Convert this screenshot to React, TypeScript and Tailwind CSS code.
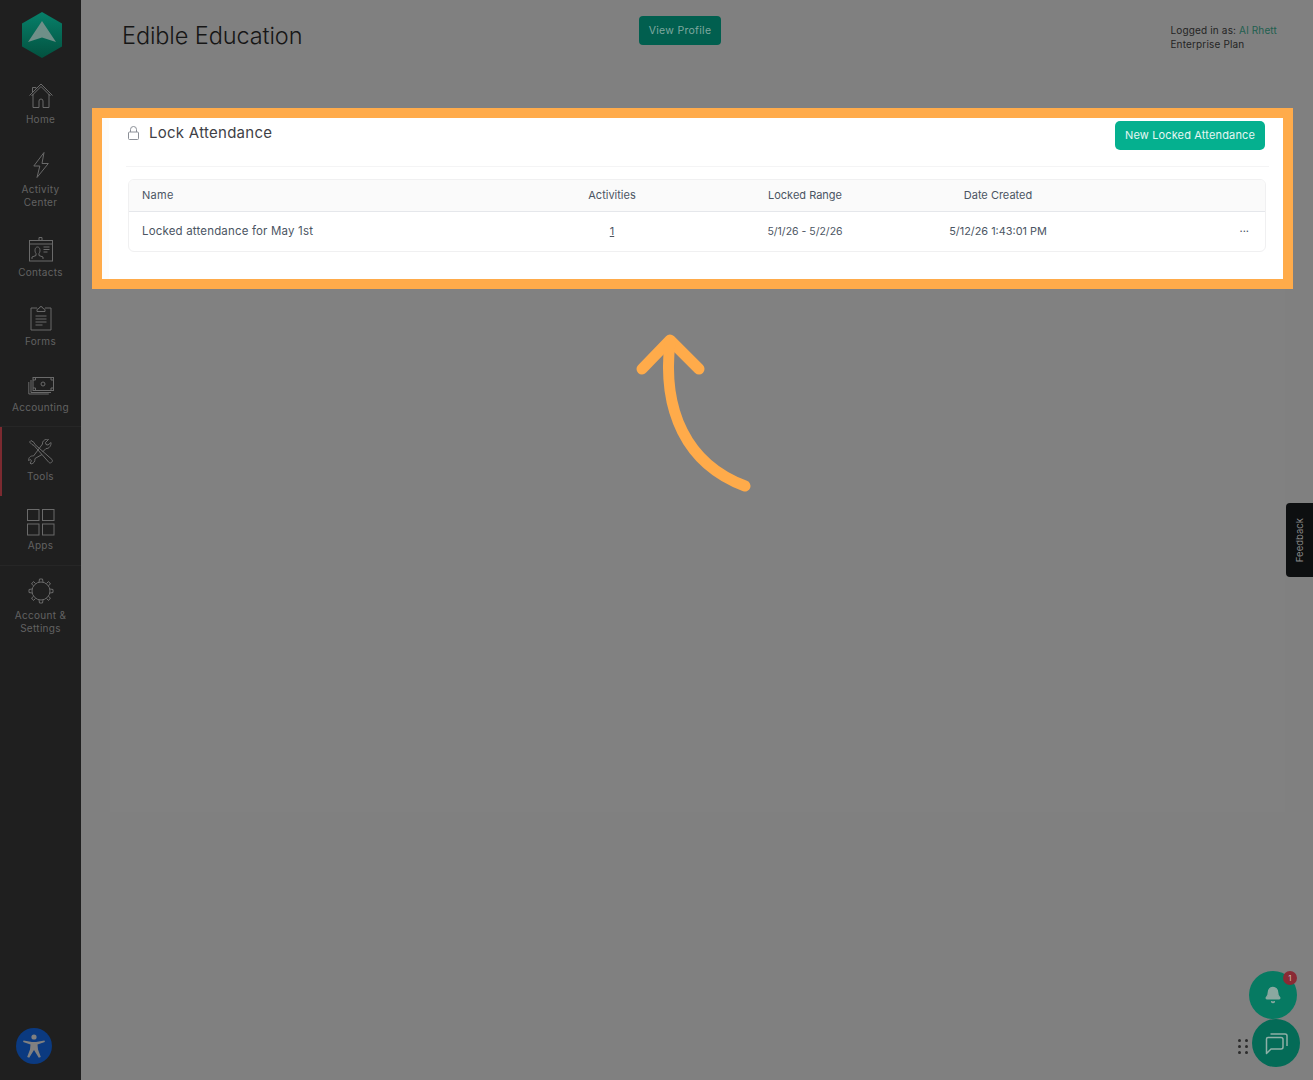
import { Bell } from 'lucide-react';

const sans = "font-['Inter','Noto_Sans',sans-serif]";

function HomeIcon() {
  return (
    <svg width="24" height="25" viewBox="0 0 24 25" fill="none" stroke="currentColor" strokeWidth="1">
      <path d="M0.500 12.500 12 1l11.500 11.500" />
      <path d="M2.500 13 12 3.500l9.500 9.500" />
      <path d="M4 11v13.500h6V18a2 2 0 0 1 4 0v6.500h6V11" />
      <path d="M3.500 9V4.500H7v1" />
    </svg>
  );
}

function BoltIcon() {
  return (
    <svg width="16" height="26" viewBox="0 0 16 26" fill="none" stroke="currentColor" strokeWidth="1">
      <path d="M11 0.500 0.800 14h6L4 25.500 15.300 11.500H9z" />
    </svg>
  );
}

function ContactsIcon() {
  return (
    <svg width="24" height="25" viewBox="0 0 24 25" fill="none" stroke="currentColor" strokeWidth="1">
      <rect x="0.500" y="3.500" width="23" height="20.500" />
      <path d="M10 3.500V0.500h3v3M0.500 7h23" />
      <path d="M3 22v-2l4-1.500v-2C5.500 15 5.500 10 8.500 10s3 5 1.500 6.500v2l4 1.500v2" />
      <path d="M14.500 10h6M14.500 12.500h6M14.500 15h4" />
    </svg>
  );
}

function FormsIcon() {
  return (
    <svg width="22" height="26" viewBox="0 0 22 26" fill="none" stroke="currentColor" strokeWidth="1">
      <path d="M7 3H1v22h20V3h-6" />
      <path d="M7 6.500V4.500l2.500-1.500a1.500 1.500 0 0 1 3 0L15 4.500v2z" />
      <path d="M5.500 11h11M5.500 14h11M5.500 17h11M5.500 20h7" />
    </svg>
  );
}

function AccountingIcon() {
  return (
    <svg width="26" height="18" viewBox="0 0 26 18" fill="none" stroke="currentColor" strokeWidth="1">
      <rect x="5" y="0.500" width="20.500" height="13" />
      <path d="M3 3v12.500h20M0.800 5v12h20" />
      <circle cx="15" cy="7" r="2" />
      <path d="M5 3h2.500V0.500M25.500 3H23V0.500M5 11h2.500v2.500M25.500 11H23v2.500" />
    </svg>
  );
}

function ToolsIcon() {
  return (
    <svg width="26" height="26" viewBox="0 0 26 26" fill="none" stroke="currentColor" strokeWidth="1">
      <path d="M1.500 3 3 1.500l3 2 1 2L24 20.500c1.500 2-1.500 4.500-3 3L6 6.500l-2-1z" />
      <path d="M14 15.500l-7 4c0 3-1 5-4 5.500l-1-1 1.500-2-1-1.500-2 1c0-3 2-5 5-4.500l9-12c-.5-3 3-5.500 6-4.500l-3 3 .5 2 2 .5 3-2.500c.5 3-2 6.500-5 6l-3.500 3.500" />
    </svg>
  );
}

function AppsIcon() {
  return (
    <svg width="28" height="27" viewBox="0 0 28 27" fill="none" stroke="currentColor" strokeWidth="1">
      <rect x="0.500" y="0.500" width="11.500" height="11" />
      <rect x="15.500" y="0.500" width="11.500" height="11" />
      <rect x="0.500" y="15" width="11.500" height="11" />
      <rect x="15.500" y="15" width="11.500" height="11" />
    </svg>
  );
}

function GearIcon() {
  return (
    <svg width="26" height="26" viewBox="0 0 26 26" fill="none" stroke="currentColor" strokeWidth="1">
      <circle cx="13" cy="13" r="9" />
      <path d="M11 4l.5-3h3L15 4M11 22l.5 3h3l.5-3M4 11l-3 .5v3L4 15M22 11l3 .5v3l-3 .5" />
      <path d="M5.500 7.500 3.500 6l2-2.500 2 2M20.500 7.500 22.500 6l-2-2.500-2 2M5.500 18.500 3.500 20l2 2.500 2-2M20.500 18.500l2 1.500-2 2.500-2-2" />
    </svg>
  );
}

function NavItem({ icon, label, active, layout, divider }: { icon: React.ReactNode; label: string[]; active?: boolean; layout: string; divider?: boolean }) {
  return (
    <div className={`box-border flex flex-col items-center justify-start text-[#6a6a6a] ${layout} ${active ? 'border-l-2 border-[#7c2a30] pr-[2px]' : ''} ${divider ? 'border-b border-[#262626]' : ''}`}>
      <div className="flex h-[26px] items-center justify-center">{icon}</div>
      <div className="text-center text-[10px] leading-[13px] tracking-[0.3px] text-[#626262]">
        {label.map((l) => (
          <div key={l}>{l}</div>
        ))}
      </div>
    </div>
  );
}

function Sidebar() {
  return (
    <aside className="flex h-full w-[81px] shrink-0 flex-col bg-[#1f1f1f]">
      {/* Logo */}
      <div className="flex h-[74px] items-start justify-center pt-[12px] pl-[2px]">
        <svg width="40" height="46" viewBox="0 0 40 46">
          <defs>
            <linearGradient id="hex" x1="0" y1="0" x2="0" y2="1">
              <stop offset="0" stopColor="#07806a" />
              <stop offset="1" stopColor="#03513f" />
            </linearGradient>
          </defs>
          <path d="M20 0 40 11.500v23L20 46 0 34.500v-23z" fill="url(#hex)" />
          <path d="M20 9 34 30 20 25.500 6 30z" fill="#6f8f88" />
        </svg>
      </div>
      <NavItem icon={<HomeIcon />} label={['Home']} layout="h-[66px] pt-[8px] gap-[5px]" />
      <NavItem icon={<BoltIcon />} label={['Activity', 'Center']} layout="h-[82px] pt-[12px] gap-[5px]" />
      <NavItem icon={<ContactsIcon />} label={['Contacts']} layout="h-[70px] pt-[14px] gap-[4px]" />
      <NavItem icon={<FormsIcon />} label={['Forms']} layout="h-[67px] pt-[13px] gap-[4px]" />
      <NavItem icon={<AccountingIcon />} label={['Accounting']} layout="h-[68px] pt-[14px] gap-[2px]" divider />
      <NavItem icon={<ToolsIcon />} label={['Tools']} active layout="h-[69px] pt-[12px] gap-[5px]" />
      <NavItem icon={<AppsIcon />} label={['Apps']} layout="h-[70px] pt-[13px] gap-[4px]" divider />
      <NavItem icon={<GearIcon />} label={['Account &', 'Settings']} layout="h-[76px] pt-[12px] gap-[5px]" />
      {/* Accessibility */}
      <div className="mt-auto mb-[16px] ml-[16px] flex h-[36px] w-[36px] items-center justify-center rounded-full bg-[#0b3a80]">
        <svg width="24" height="26" viewBox="0 0 24 26" fill="#808080">
          <circle cx="12" cy="4" r="2.600" />
          <path d="M1.500 7.500 10 9h4l8.500-1.500.4 1.400L15.500 11.500l.5 5 2.800 7.500-2 .8L12 17l-4.800 7.800-2-.8L8 16.500l.5-5L1.100 8.900z" />
        </svg>
      </div>
    </aside>
  );
}

function Header() {
  return (
    <header className="flex h-[80px] shrink-0 items-start bg-[#808080] pl-[41px] pr-[36px]">
      <div className="w-[517px] pt-[20px] text-[23.500px] font-light leading-[31px] tracking-[-0.1px] text-[#161616]">Edible Education</div>
      <div className="mt-[16px] flex h-[29px] w-[82px] items-center justify-center rounded-[4px] bg-[#015f4f] text-[10.500px] tracking-[0.3px] text-[#7fa89f]">View Profile</div>
      <div className="ml-auto pt-[23px] text-[10px] leading-[14px] tracking-[0.16px] text-[#242424]">
        <div>
          Logged in as: <span className="text-[#205f4f]">Al Rhett</span>
        </div>
        <div>Enterprise Plan</div>
      </div>
    </header>
  );
}

function LockTable() {
  const cols = 'grid grid-cols-[399px_168px_218px_168px_1fr] items-center';
  return (
    <div className="mt-[28px] ml-[11px] h-[181px] w-[1201px] shrink-0 border-[10px] border-[#ffab4a] bg-[#fcfcfc]">
      <div className="ml-[7px] h-full bg-white">
        <div className="ml-[17px] mr-[14px] flex h-[49px] items-start justify-between border-b border-[#f4f4f5] pl-[2px]">
          <div className="flex items-center gap-[10px] pt-[5px]">
            <svg width="11" height="14" viewBox="0 0 11 14" fill="none" stroke="#8b8f97" strokeWidth="1">
              <rect x="0.500" y="6" width="10" height="7.500" rx="1" />
              <path d="M2.500 6V3.500a3 3 0 0 1 6 0V6" />
            </svg>
            <span className="text-[15px] leading-[20px] tracking-[0.27px] text-[#3f3f46]">Lock Attendance</span>
          </div>
          <div className="mr-[4px] mt-[3px] flex h-[29px] w-[150px] items-center justify-center rounded-[5px] bg-[#05b08f] text-[11px] tracking-[0.15px] text-[#e6f7f3]">New Locked Attendance</div>
        </div>
        <div className="ml-[19px] mr-[17px] mt-[12px] h-[73px] overflow-hidden rounded-[6px] border border-[#f0f0f1] text-[11px] text-[#4b5563]">
          <div className={`${cols} h-[32px] border-b border-[#e5e7eb] bg-[#fafafa]`}>
            <div className="pl-[13px] tracking-[0.3px]">Name</div>
            <div className="text-center">Activities</div>
            <div className="text-center">Locked Range</div>
            <div className="text-center">Date Created</div>
            <div />
          </div>
          <div className={`${cols} h-[39px]`}>
            <div className="pl-[13px] text-[11.500px] tracking-[0.17px]">Locked attendance for May 1st</div>
            <div className="text-center underline">1</div>
            <div className="text-center text-[10.500px]">5/1/26 - 5/2/26</div>
            <div className="text-center text-[10.900px] whitespace-nowrap">5/12/26 1:43:01 PM</div>
            <div className="pr-[16px] text-right">···</div>
          </div>
        </div>
      </div>
    </div>
  );
}

export default function App() {
  return (
    <div className={`relative flex h-[1080px] w-[1313px] overflow-hidden bg-[#808080] ${sans}`}>
      <Sidebar />
      <main className="flex min-w-0 flex-1 flex-col">
        <Header />
        <LockTable />
        {/* Faint panel under the highlight */}
        <div className="ml-[29px] h-[523px] w-[1175px] bg-[#818181]" />
      </main>

      {/* Annotation arrow */}
      <svg className="absolute left-[620px] top-[320px]" width="150" height="180" viewBox="0 0 150 180" fill="none" stroke="#ffab4a" strokeWidth="11" strokeLinecap="round" strokeLinejoin="round">
        <path d="M22 49 50 20l29 29" />
        <path d="M50 22C42 90 66 144 125 166" />
      </svg>

      {/* Feedback tab */}
      <div className="absolute right-0 top-[503px] flex h-[74px] w-[27px] items-center justify-center rounded-l-[4px] bg-[#0d0f10]">
        <span className="-rotate-90 whitespace-nowrap text-[9.500px] text-[#8a8a8a]">Feedback</span>
      </div>

      {/* Floating buttons */}
      <div className="absolute left-[1249px] top-[971px] flex h-[48px] w-[48px] items-center justify-center rounded-full bg-[#067a62]">
        <Bell size={18} fill="#8aa8a0" stroke="#8aa8a0" />
        <div className="absolute right-0 top-0 flex h-[14px] w-[14px] items-center justify-center rounded-full bg-[#8a2a34] text-[8px] text-[#c9b7b9]">1</div>
      </div>
      <div className="absolute left-[1252px] top-[1019px] flex h-[48px] w-[48px] items-center justify-center rounded-full bg-[#046b57]">
        <svg width="23" height="23" viewBox="0 0 23 23" fill="none" stroke="#8fb0a7" strokeWidth="1.500" strokeLinejoin="round">
          <path d="M3 5.500h13a2 2 0 0 1 2 2V15a2 2 0 0 1-2 2H6l-4.500 4.500V7a1.500 1.500 0 0 1 1.500-1.500z" />
          <path d="M5.500 2h14.500a2 2 0 0 1 2 2v10" />
        </svg>
      </div>
      <div className="absolute left-[1238px] top-[1039px] grid grid-cols-2 gap-x-[4px] gap-y-[3px]">
        {[0, 1, 2, 3, 4, 5].map((i) => (
          <span key={i} className="h-[3px] w-[3px] rounded-full bg-[#2c2c2c]" />
        ))}
      </div>
    </div>
  );
}
